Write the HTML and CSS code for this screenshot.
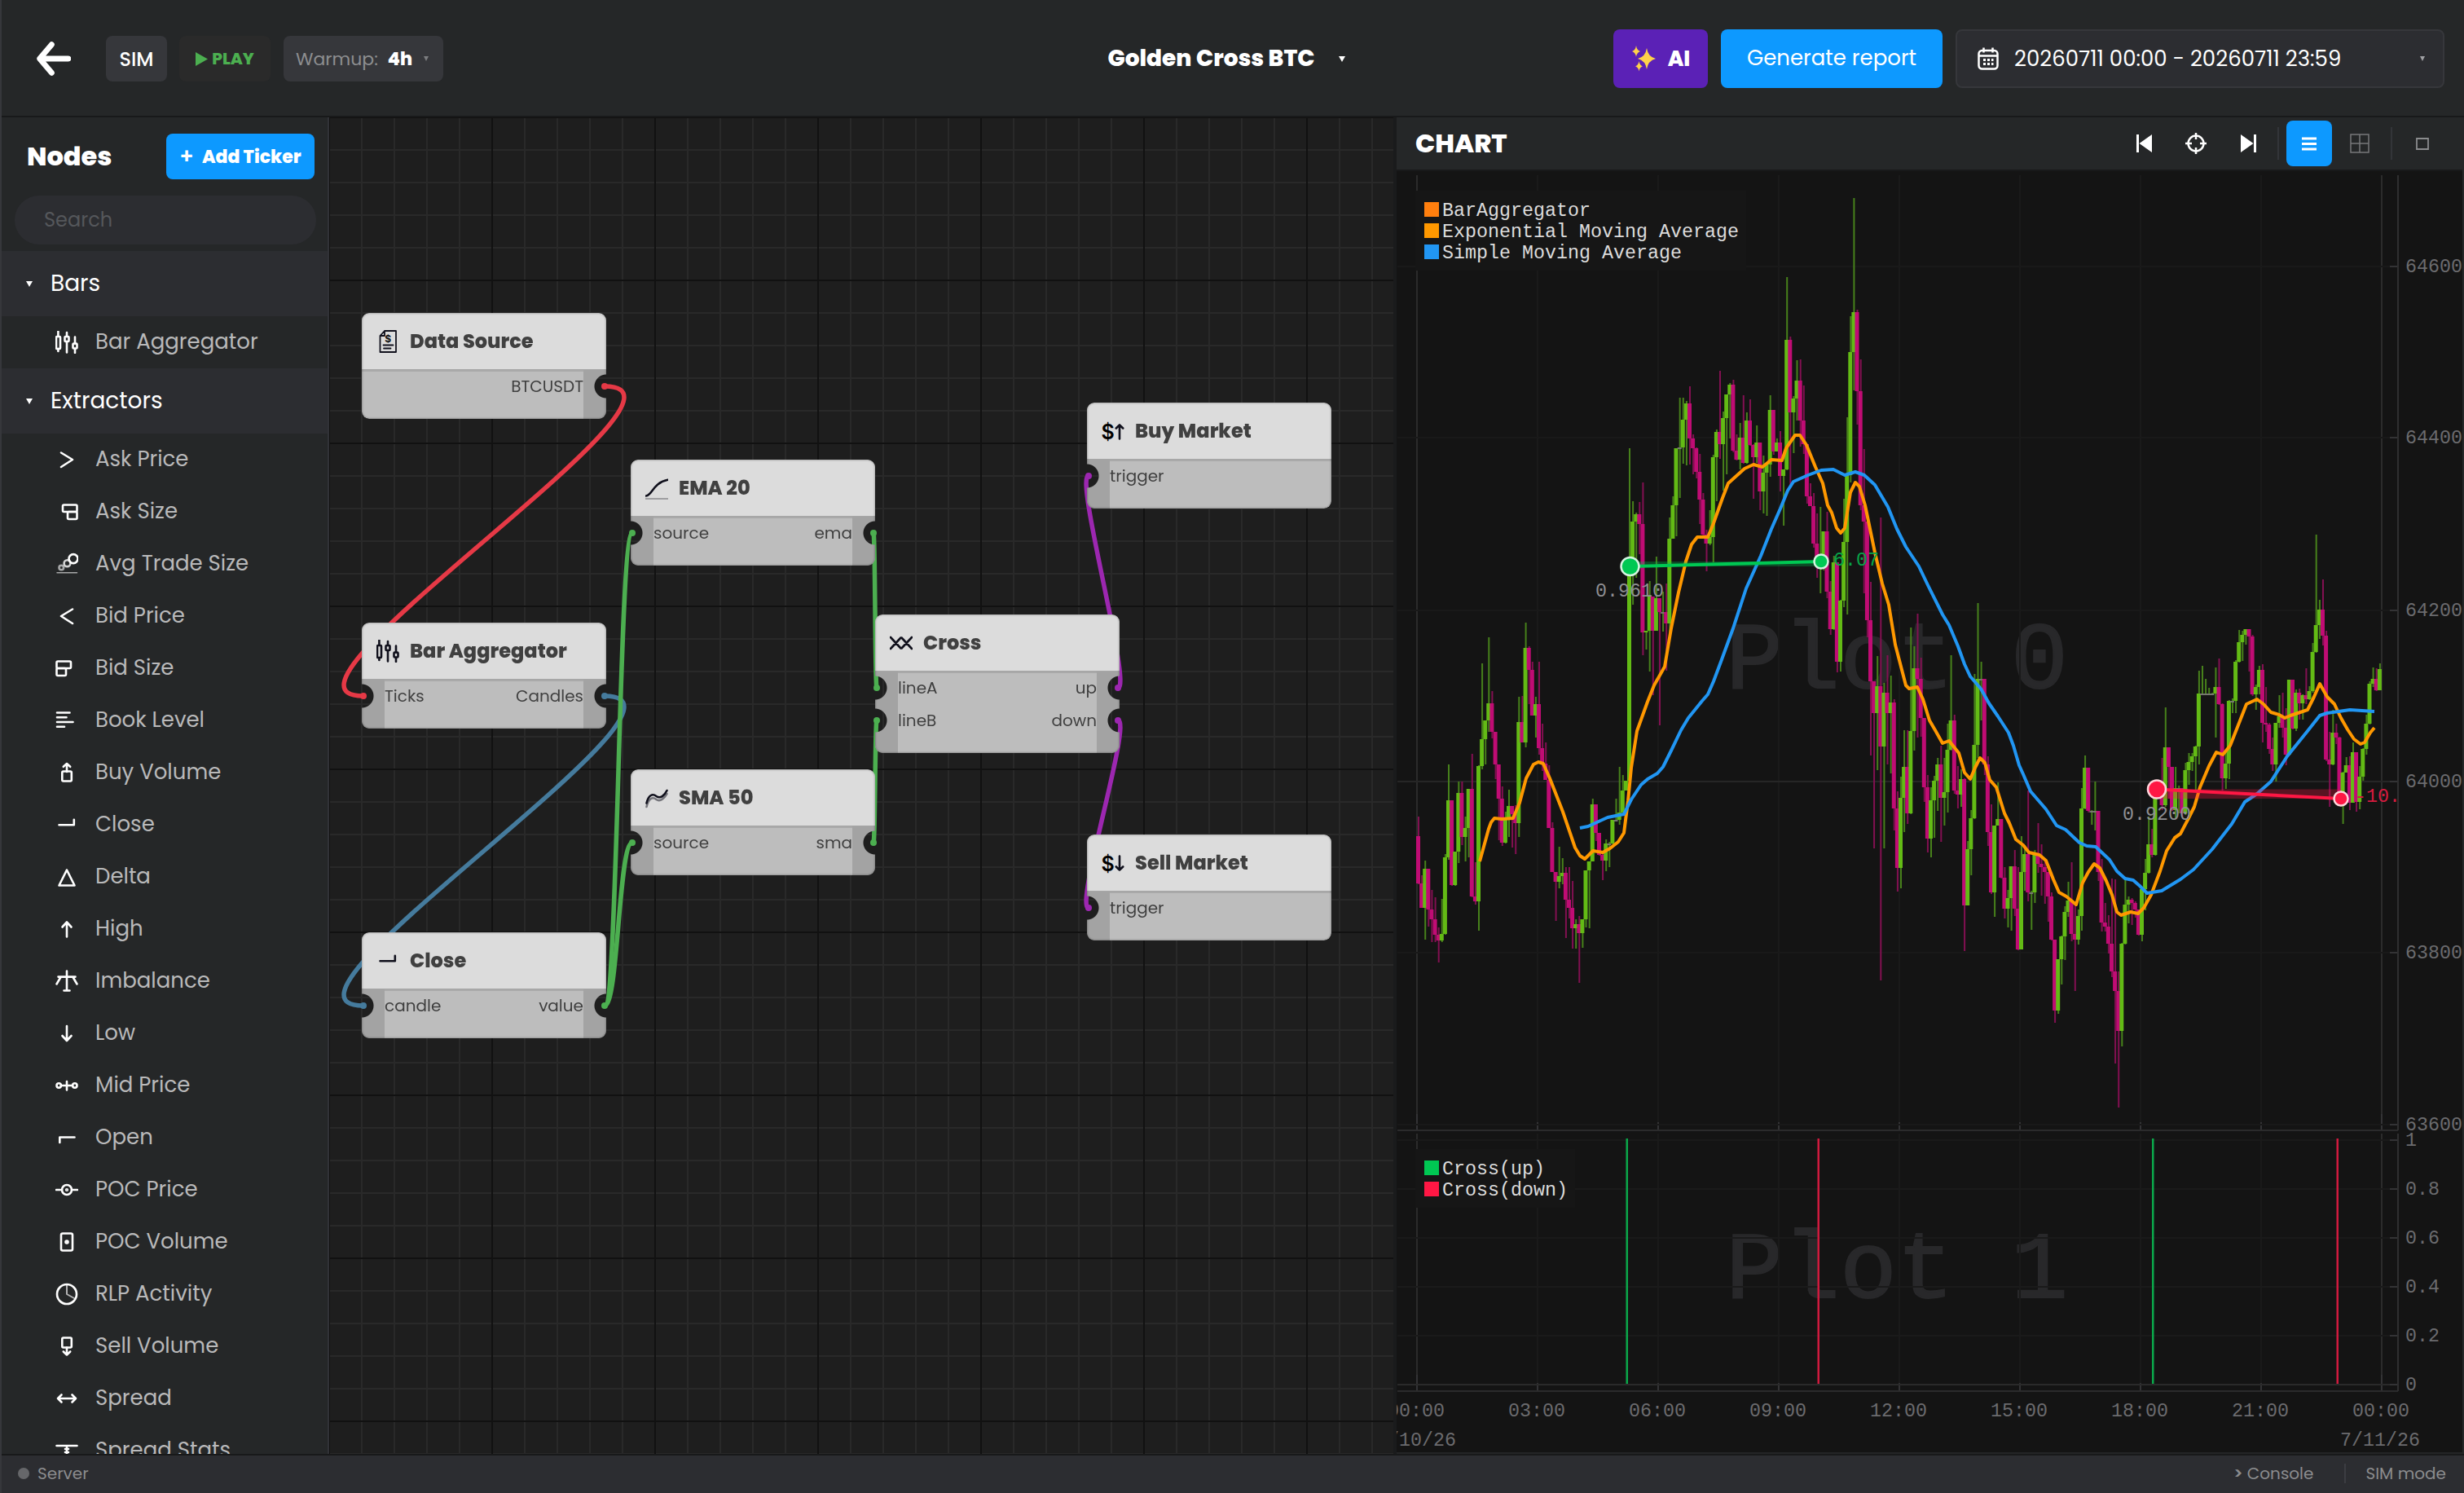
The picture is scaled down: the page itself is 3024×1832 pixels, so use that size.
FILE: index.html
```html
<!DOCTYPE html>
<html lang="en">
<head>
<meta charset="utf-8">
<title>Golden Cross BTC</title>
<link rel="stylesheet" href="styles.css">
</head>
<body>
<svg class="sprite" aria-hidden="true">
  <symbol id="i-bars" viewBox="0 0 28 28"><path d="M3.4.5v6M3.4 22v3M14 2v5M14 13v13.5M24 7.500v8M24 22v5"/><rect x="1" y="7" width="5" height="15" rx="1"/><rect x="11.500" y="7" width="5" height="6" rx="1"/><rect x="21.500" y="15.500" width="5" height="6" rx="1"/></symbol>
  <symbol id="i-askp" viewBox="0 0 28 28"><path d="M7 5.500 21 14 7 23"/></symbol>
  <symbol id="i-asks" viewBox="0 0 28 28"><rect x="9" y="5.500" width="17.500" height="8.500" rx="1.500"/><rect x="15" y="14" width="11.500" height="9" rx="1.500"/></symbol>
  <symbol id="i-avg" viewBox="0 0 28 28"><circle cx="7.300" cy="18.500" r="2.800" opacity=".6"/><circle cx="14.500" cy="13.200" r="3.900" opacity=".8"/><circle cx="22" cy="7.600" r="5.500"/><path d="M2 24.800h24.500" stroke-width="1.500" opacity=".6"/></symbol>
  <symbol id="i-bidp" viewBox="0 0 28 28"><path d="M21 5.500 7 14 21 23"/></symbol>
  <symbol id="i-bids" viewBox="0 0 28 28"><rect x="1.500" y="5.500" width="17.500" height="8.500" rx="1.500"/><rect x="1.500" y="14" width="11.500" height="9" rx="1.500"/></symbol>
  <symbol id="i-book" viewBox="0 0 28 28"><path d="M2 4.500h15.500M2 10.200h11.500M2 16h19.500M2 21.700h9"/></symbol>
  <symbol id="i-buyv" viewBox="0 0 28 28"><rect x="8.300" y="12.500" width="11.500" height="12" rx="1.500"/><path d="M14 13V3M9.800 6.800 14 3l4.200 3.800"/></symbol>
  <symbol id="i-close" viewBox="0 0 28 28"><path d="M4.500 14.300h18.300V7.800"/></symbol>
  <symbol id="i-delta" viewBox="0 0 28 28"><path d="M14 5.500 4.500 24.500h19z"/></symbol>
  <symbol id="i-high" viewBox="0 0 28 28"><path d="M14 23.500V5.500M8.500 11.500 14 5.500l5.500 6"/></symbol>
  <symbol id="i-imb" viewBox="0 0 28 28"><path d="M14 1.500v24M10.500 25.500h7M3.500 8.600h21M6.500 9 1.500 17.500M21.500 9l5 8.500"/></symbol>
  <symbol id="i-low" viewBox="0 0 28 28"><path d="M14 5v18M8.500 17l5.500 6 5.500-6"/></symbol>
  <symbol id="i-mid" viewBox="0 0 28 28"><circle cx="4.200" cy="14" r="2.700"/><circle cx="23.800" cy="14" r="2.700"/><path d="M7 14h14M14 9v10.500"/></symbol>
  <symbol id="i-open" viewBox="0 0 28 28"><path d="M5.300 20v-6.500h18.200"/></symbol>
  <symbol id="i-pocp" viewBox="0 0 28 28"><circle cx="14" cy="14" r="6"/><circle cx="14" cy="14" r=".8"/><path d="M1 14h7M20 14h7"/></symbol>
  <symbol id="i-pocv" viewBox="0 0 28 28"><rect x="7" y="3.500" width="14" height="21" rx="2"/><circle cx="14" cy="14" r="1.500"/></symbol>
  <symbol id="i-rlp" viewBox="0 0 28 28"><circle cx="14" cy="14" r="12"/><path d="M14 3v11l9 5" opacity=".65" stroke-width="2"/></symbol>
  <symbol id="i-sellv" viewBox="0 0 28 28"><rect x="8.300" y="3.500" width="11.500" height="12" rx="1.500"/><path d="M14 15.500v9M9.800 20.500 14 24.500l4.200-4"/></symbol>
  <symbol id="i-spread" viewBox="0 0 28 28"><path d="M3 14h22M7.500 9.500 3 14l4.500 4.500M20.500 9.500 25 14l-4.500 4.500"/></symbol>
  <symbol id="i-stats" viewBox="0 0 28 28"><path d="M1.500 8h25M14 9v15M12 12h4M12 16h4M1.500 26h25"/></symbol>
  <symbol id="i-doc" viewBox="0 0 28 28"><path d="M10 1h14v26H4.500V7zM10 1v6H4.500M8.500 18.500h12M9 22.500h8.500" stroke-width="1.800"/><text x="10.300" y="14.500" class="doc-sign">$</text></symbol>
  <symbol id="i-ema" viewBox="0 0 28 28"><path d="M.8 23.500C9 22.500 9 7.500 27.500 3.800"/><path d="M.5 27h27" stroke-width="1.200" opacity=".6"/></symbol>
  <symbol id="i-sma" viewBox="0 0 28 28"><path d="M1.500 25C4 14 9 12.500 13.500 16c5 3.500 10-2 13-7" opacity=".5"/><path d="M1.500 20.500C4 10 9 8.500 13.500 12c5 3.500 10-1 13-7"/></symbol>
  <symbol id="i-cross" viewBox="0 0 28 28"><path d="M1 7l12.500 13.500h1L27 7M1 21 13.500 7.500h1L27 21"/></symbol>
  <symbol id="i-buy" viewBox="0 0 28 28"><text x="-.5" y="23.500" class="buy-sign">$</text><path d="M22 23.500V6.500M17.800 10.500 22 6.300l4.200 4.200"/></symbol>
  <symbol id="i-sell" viewBox="0 0 28 28"><text x="-.5" y="23.500" class="buy-sign">$</text><path d="M22 5.500v17M17.800 18.500 22 22.700l4.200-4.200"/></symbol>
</svg>

<div class="app">
  <header class="topbar">
    <div class="topbar-left">
      <svg class="back" viewBox="0 0 40 40"><path d="M17.500 3.500 3.500 20l14 16.500M4 20h33"/></svg>
      <button class="btn-sim">SIM</button>
      <button class="btn-play"><svg width="15" height="17" viewBox="0 0 15 17"><path d="M0 0v17l15-8.500z" fill="currentColor"/></svg><span>PLAY</span></button>
      <div class="warmup"><span class="warmup-label">Warmup:</span><b>4h</b><i class="caret dim"></i></div>
    </div>
    <div class="title"><span>Golden Cross BTC</span><i class="caret"></i></div>
    <div class="topbar-right">
      <button class="btn-ai"><svg width="32" height="32" viewBox="0 0 32 32"><path d="M19 3q1.500 10.500 11 13-9.500 2.500-11 13-1.500-10.500-11-13 9.500-2.500 11-13zM6 0q.8 5.500 5 7-4.200 1.500-5 7-.8-5.500-5-7 4.200-1.500 5-7zM9.500 19q.7 5 4.500 6.300-3.800 1.300-4.500 6.300-.7-5-4.500-6.300 3.800-1.300 4.500-6.300z" fill="#ffd24a"/></svg><span>AI</span></button>
      <button class="btn-report">Generate report</button>
      <div class="daterange">
        <svg width="26" height="28" viewBox="0 0 26 28"><rect x="1.500" y="4" width="23" height="22.500" rx="4"/><path d="M1.500 10.500h23M7.500.5v6M18.500.5v6"/><path d="M7 15.500h3M12 15.500h3M17 15.500h2.500M7 20.500h3M12 20.500h3M17 20.500h2.500" stroke-width="3"/></svg>
        <span>20260711 00:00 - 20260711 23:59</span><i class="caret dim"></i>
      </div>
    </div>
  </header>

  <main class="workspace">
    <aside class="sidebar">
      <div class="side-head"><h2>Nodes</h2><button class="btn-add"><span class="plus">+</span><span>Add Ticker</span></button></div>
      <div class="search">Search</div>
      <div class="section"><i class="caret"></i>Bars</div>
      <div class="item"><svg><use href="#i-bars"/></svg><span>Bar Aggregator</span></div>
      <div class="section"><i class="caret"></i>Extractors</div>
      <div class="item"><svg><use href="#i-askp"/></svg><span>Ask Price</span></div>
      <div class="item"><svg><use href="#i-asks"/></svg><span>Ask Size</span></div>
      <div class="item"><svg><use href="#i-avg"/></svg><span>Avg Trade Size</span></div>
      <div class="item"><svg><use href="#i-bidp"/></svg><span>Bid Price</span></div>
      <div class="item"><svg><use href="#i-bids"/></svg><span>Bid Size</span></div>
      <div class="item"><svg><use href="#i-book"/></svg><span>Book Level</span></div>
      <div class="item"><svg><use href="#i-buyv"/></svg><span>Buy Volume</span></div>
      <div class="item"><svg><use href="#i-close"/></svg><span>Close</span></div>
      <div class="item"><svg><use href="#i-delta"/></svg><span>Delta</span></div>
      <div class="item"><svg><use href="#i-high"/></svg><span>High</span></div>
      <div class="item"><svg><use href="#i-imb"/></svg><span>Imbalance</span></div>
      <div class="item"><svg><use href="#i-low"/></svg><span>Low</span></div>
      <div class="item"><svg><use href="#i-mid"/></svg><span>Mid Price</span></div>
      <div class="item"><svg><use href="#i-open"/></svg><span>Open</span></div>
      <div class="item"><svg><use href="#i-pocp"/></svg><span>POC Price</span></div>
      <div class="item"><svg><use href="#i-pocv"/></svg><span>POC Volume</span></div>
      <div class="item"><svg><use href="#i-rlp"/></svg><span>RLP Activity</span></div>
      <div class="item"><svg><use href="#i-sellv"/></svg><span>Sell Volume</span></div>
      <div class="item"><svg><use href="#i-spread"/></svg><span>Spread</span></div>
      <div class="item"><svg><use href="#i-stats"/></svg><span>Spread Stats</span></div>
    </aside>

    <section class="canvas">
      <svg class="links" viewBox="404 144 1306 1640">
        <g stroke="#e63946"><path d="M742 474C890 474 298 854 446 854"/></g>
        <g stroke="#457b9d"><path d="M742 854C890 854 298 1234 446 1234"/></g>
        <g stroke="#4caf50"><path d="M742 1234C759 1234 759 654 776 654"/><path d="M742 1234C759 1234 759 1034 776 1034"/><path d="M1072 654C1074 654 1074 844 1076 844"/><path d="M1072 1034C1074 1034 1074 884 1076 884"/></g>
        <g stroke="#9c27b0"><path d="M1372 844C1390 844 1318 584 1336 584"/><path d="M1372 884C1390 884 1318 1114 1336 1114"/></g>
        <g class="ends">
          <circle cx="742" cy="474" r="4" fill="#e63946"/><circle cx="446" cy="854" r="4" fill="#e63946"/>
          <circle cx="742" cy="854" r="4" fill="#457b9d"/><circle cx="446" cy="1234" r="4" fill="#457b9d"/>
          <circle cx="742" cy="1234" r="4" fill="#4caf50"/><circle cx="776" cy="654" r="4" fill="#4caf50"/><circle cx="776" cy="1034" r="4" fill="#4caf50"/>
          <circle cx="1072" cy="654" r="4" fill="#4caf50"/><circle cx="1076" cy="844" r="4" fill="#4caf50"/><circle cx="1072" cy="1034" r="4" fill="#4caf50"/><circle cx="1076" cy="884" r="4" fill="#4caf50"/>
          <circle cx="1372" cy="844" r="4" fill="#9c27b0"/><circle cx="1336" cy="584" r="4" fill="#9c27b0"/><circle cx="1372" cy="884" r="4" fill="#9c27b0"/><circle cx="1336" cy="1114" r="4" fill="#9c27b0"/>
        </g>
      </svg>
      <article class="node out n-source"><h3><svg><use href="#i-doc"/></svg>Data Source</h3><div class="ports"><p><span></span><span>BTCUSDT</span></p></div></article>
      <article class="node in out n-bars"><h3><svg><use href="#i-bars"/></svg>Bar Aggregator</h3><div class="ports"><p><span>Ticks</span><span>Candles</span></p></div></article>
      <article class="node in out n-close"><h3><svg><use href="#i-close"/></svg>Close</h3><div class="ports"><p><span>candle</span><span>value</span></p></div></article>
      <article class="node in out n-ema"><h3><svg><use href="#i-ema"/></svg>EMA 20</h3><div class="ports"><p><span>source</span><span>ema</span></p></div></article>
      <article class="node in out n-sma"><h3><svg><use href="#i-sma"/></svg>SMA 50</h3><div class="ports"><p><span>source</span><span>sma</span></p></div></article>
      <article class="node in out two n-cross"><h3><svg><use href="#i-cross"/></svg>Cross</h3><div class="ports"><p><span>lineA</span><span>up</span></p><p><span>lineB</span><span>down</span></p></div></article>
      <article class="node in n-buy"><h3><svg><use href="#i-buy"/></svg>Buy Market</h3><div class="ports"><p><span>trigger</span></p></div></article>
      <article class="node in n-sell"><h3><svg><use href="#i-sell"/></svg>Sell Market</h3><div class="ports"><p><span>trigger</span></p></div></article>
    </section>

    <section class="chart">
      <div class="chart-head">
        <h2>CHART</h2>
        <div class="tools">
          <svg width="20" height="22" viewBox="0 0 20 22"><path d="M1 0h3v22H1zM20 0v22L4.500 11z" fill="#fff"/></svg>
          <svg class="target" width="28" height="28" viewBox="0 0 28 28"><circle cx="14" cy="14" r="9.500"/><path d="M14 1v8M14 19v8M1 14h8M19 14h8"/></svg>
          <svg class="next" width="20" height="22" viewBox="0 0 20 22"><path d="M16 0h3v22h-3zM0 0v22l15.500-11z" fill="#fff"/></svg>
          <i class="sep"></i>
          <button class="btn-list"><svg width="18" height="18" viewBox="0 0 18 18"><path d="M0 3h18M0 9.500h18M0 16h18" stroke="#fff" stroke-width="3.200"/></svg></button>
          <svg class="grid" width="24" height="24" viewBox="0 0 24 24"><path d="M1 1h22v22H1zM12 1v22M1 12h22"/></svg>
          <i class="sep"></i>
          <svg class="win" width="16" height="16" viewBox="0 0 16 16"><path d="M1 2h14v13H1z"/></svg>
        </div>
      </div>
      <svg class="plot" id="plot" viewBox="1714 210 1308 1574"></svg>
    </section>
  </main>

  <footer class="status">
    <i class="dot"></i><span class="server">Server</span>
    <span class="console"><b>&gt;</b> Console</span><i class="sep"></i><span class="mode">SIM mode</span>
  </footer>
</div>
<script src="plot.js"></script>
</body>
</html>
```
FILE: styles.css
```css
* { box-sizing: border-box; }
body { margin: 0; background: #252728; font-family: "Poppins", "Inter", sans-serif; color: #fff; }
h2, h3, p { margin: 0; }
button { font: inherit; color: inherit; border: 0; padding: 0; display: flex; align-items: center; justify-content: center; }
.sprite { display: none; }
.app { width: 3024px; height: 1832px; display: flex; flex-direction: column; border-left: 2px solid #36373b; overflow: hidden; }

.caret { width: 0; height: 0; border: 4px solid transparent; border-top: 7px solid currentColor; border-bottom: 0; flex: none; }
.caret.dim { color: #a0a1a4; border-width: 6px 3.500px 0; }

.topbar { height: 144px; flex: none; border-bottom: 2px solid #18191a; display: grid; grid-template-columns: 1fr auto 1fr; align-items: center; padding: 2px 24px 0 24px; }
.topbar-left { display: flex; align-items: center; height: 56px; padding-left: 19px; }
.back { width: 42px; height: 42px; fill: none; stroke: #fff; stroke-width: 6.500; stroke-linecap: round; stroke-linejoin: round; margin-right: 43px; }
.btn-sim { width: 75px; height: 56px; border-radius: 8px; background: #36373b; font-size: 24px; font-weight: 500; }
.btn-play { width: 112px; height: 56px; border-radius: 8px; background: #2a2a2a; color: #4caf50; font-size: 20px; font-weight: 800; margin: 0 16px 0 15px; gap: 5px; }
.warmup { width: 196px; height: 56px; border-radius: 8px; background: #36373b; display: flex; align-items: center; padding-left: 15px; font-size: 22px; }
.warmup b { font-weight: 800; }
.warmup-label { color: #8d8e90; margin-right: 12px; }
.warmup .caret { margin-left: 14px; color: #7c7d80; }
.title { display: flex; align-items: center; gap: 29px; padding-right: 16px; font-size: 28px; font-weight: 800; }
.topbar-right { display: flex; justify-content: flex-end; gap: 16px; height: 72px; }
.btn-ai { width: 116px; border-radius: 8px; background: #5b21b6; font-size: 26px; font-weight: 800; gap: 13px; }
.btn-report { width: 272px; border-radius: 8px; background: #0d99ff; font-size: 26px; padding-bottom: 2px; }
.daterange { width: 600px; border-radius: 8px; border: 2px solid #36373b; background: #2c2d31; display: flex; align-items: center; padding: 0 22px 0 25px; font-size: 26px; }
.daterange svg { fill: none; stroke: #fff; stroke-width: 2.500; margin-right: 19px; }
.daterange .caret { margin-left: auto; }

.workspace { height: 1640px; flex: none; display: grid; grid-template-columns: 402px 1306px 1312px; }

.sidebar { border-right: 2px solid #313237; overflow: hidden; }
.side-head { height: 96px; padding: 0 16px 0 31px; display: flex; align-items: center; justify-content: space-between; }
.side-head h2 { font-size: 32px; font-weight: 800; }
.btn-add { width: 182px; height: 56px; border-radius: 8px; background: #0d99ff; font-size: 22px; font-weight: 800; gap: 10px; }
.plus { font-size: 26px; font-weight: 600; }
.search { height: 60px; margin: 0 14px 8px 16px; border-radius: 30px; background: #2c2d31; color: #55575b; font-size: 24px; line-height: 60px; padding-left: 36px; }
.section { height: 80px; background: #2c2d31; display: flex; align-items: center; gap: 22px; padding-left: 30px; font-size: 28px; }
.item { height: 64px; display: flex; align-items: center; gap: 21px; padding-left: 66px; font-size: 26px; color: #b9b9ba; }
.item span { padding-bottom: 2px; }
.item svg, .node h3 svg { width: 28px; height: 28px; flex: none; fill: none; stroke: #fff; stroke-width: 2.600; stroke-linecap: round; stroke-linejoin: round; overflow: visible; }

.canvas {
  position: relative; overflow: hidden; background-color: #1e1e1e;
  background-image:
    repeating-linear-gradient(90deg, #111 0 1px, transparent 1px 199px, #111 199px 200px),
    repeating-linear-gradient(180deg, #111 0 1px, transparent 1px 199px, #111 199px 200px),
    repeating-linear-gradient(90deg, #292929 0 1px, transparent 1px 39px, #292929 39px 40px),
    repeating-linear-gradient(180deg, #292929 0 1px, transparent 1px 39px, #292929 39px 40px);
}
.links { position: absolute; left: 0; top: 0; width: 1306px; height: 1640px; fill: none; stroke-width: 5.500; }
.node {
  position: absolute; width: 300px; height: 130px; border-radius: 9px; overflow: hidden; background: #bdbdbd; color: #3f3f3f;
  --il: #000; --ol: #000; --il2: #000; --ol2: #000;
  mask-image:
    radial-gradient(circle at 0 90px, var(--il) 14px, #000 15px),
    radial-gradient(circle at 100% 90px, var(--ol) 14px, #000 15px),
    radial-gradient(circle at 0 130px, var(--il2) 14px, #000 15px),
    radial-gradient(circle at 100% 130px, var(--ol2) 14px, #000 15px);
  mask-composite: intersect;
}
.node::after { content: ""; position: absolute; inset: 0; border-radius: 9px; box-shadow: inset 0 0 2px 1px rgba(0, 0, 0, .22); }
.node.in { --il: transparent; }
.node.out { --ol: transparent; }
.node.two { height: 170px; --il2: transparent; --ol2: transparent; }
.node h3 { height: 70px; display: flex; align-items: center; gap: 13px; padding-left: 18px; background: #dcdcdc; border-bottom: 1px solid #a6a6a6; font-size: 24px; font-weight: 800; color: #404040; }
.node h3 svg { stroke: #10101c; color: #10101c; }
.doc-sign { font: 700 12px "Inter", sans-serif; fill: #111; stroke: none; }
.buy-sign { font: 600 25px "Inter", sans-serif; fill: #000; stroke: none; }
.ports { height: 100%; border: 0 solid #a3a3a3; font-size: 20px; box-shadow: inset 0 2px #a9a9a9; }
.node.in .ports { border-left-width: 28px; }
.node.out .ports { border-right-width: 28px; }
.ports p { height: 40px; line-height: 40px; display: flex; justify-content: space-between; }
.n-source { left: 40px; top: 240px; }
.n-bars { left: 40px; top: 620px; }
.n-close { left: 40px; top: 1000px; }
.n-ema { left: 370px; top: 420px; }
.n-sma { left: 370px; top: 800px; }
.n-cross { left: 670px; top: 610px; }
.n-buy { left: 930px; top: 350px; }
.n-sell { left: 930px; top: 880px; }

.chart { border-left: 4px solid #1a1b1c; display: flex; flex-direction: column; }
.chart-head { height: 66px; flex: none; border-bottom: 2px solid #18191a; display: flex; align-items: center; justify-content: space-between; padding: 0 41px 0 23px; }
.chart-head h2 { font-size: 32px; font-weight: 800; }
.tools { display: flex; align-items: center; }
.tools svg { fill: none; stroke-width: 2.500; }
.target { stroke: #fff; margin: 0 41px 0 40px; }
.tools .sep { width: 2px; height: 40px; background: #333539; }
.next + .sep { margin-left: 25px; }
.btn-list { width: 56px; height: 56px; border-radius: 8px; background: #0d99ff; margin-left: 9px; }
.tools .grid { stroke: #77787a; stroke-width: 1.500; margin: 0 26px 0 22px; }
.tools .win { stroke: #8a8b8d; stroke-width: 1.800; margin-left: 29px; }
.plot { width: 1308px; height: 1574px; background: #141414; flex: none; font-family: "Liberation Mono", monospace; font-size: 23.330px; }

.status { height: 48px; flex: none; border-top: 2px solid #18191a; background: #2c2d31; display: flex; align-items: center; font-size: 20px; color: #8b8c8e; padding: 0 22px 3px 20px; }
.dot { width: 14px; height: 14px; border-radius: 50%; background: #66676a; margin-right: 10px; }
.console { margin-left: auto; }
.console b { font-weight: 600; }
.status .sep { width: 2px; height: 24px; background: #3c3d42; margin: 0 24px 0 38px; }
```
FILE: plot.js
```js
// Five-minute bars as [close, high, low] in plot pixels; each bar opens at the previous close.
const FIRST_OPEN = 1026;
const BARS = [
[1084,1002,1085],[1114,1074,1114],[1066,1056,1153],[1116,1066,1137],[1128,1092,1156],[1147,1101,1156],[1154,1138,1181],[1146,1103,1156],[1052,1048,1147],[982,938,1055],
[1086,982,1087],[1045,1045,1087],[973,959,1059],[1027,959,1037],[1016,1002,1057],[968,968,1052],[1100,925,1101],[1106,1058,1110],[940,939,1142],[907,814,944],
[884,884,938],[863,782,898],[898,848,906],[938,898,956],[980,938,1031],[1034,965,1038],[1003,996,1035],[989,969,1027],[999,989,1040],[1010,988,1048],
[886,855,1027],[911,854,911],[795,764,917],[822,793,864],[878,812,878],[864,855,905],[918,812,926],[937,888,946],[957,911,957],[1016,939,1016],
[1070,1009,1070],[1082,1070,1130],[1075,1039,1090],[1071,1053,1085],[1104,1064,1151],[1114,1064,1127],[1139,1081,1164],[1134,1128,1164],[1145,1124,1206],[1128,1128,1163],
[1068,1068,1138],[1057,1057,1139],[987,980,1057],[1022,987,1032],[1049,1022,1050],[1056,1045,1080],[1035,1030,1069],[1035,1033,1064],[1006,1006,1036],[1006,980,1008],
[997,941,1012],[970,951,997],[958,958,970],[695,550,958],[640,615,742],[631,629,709],[643,616,680],[776,592,804],[774,774,797],[732,713,824],
[774,732,853],[734,683,774],[751,734,890],[751,726,775],[765,716,823],[661,635,776],[620,609,661],[550,550,658],[549,488,611],[515,488,569],
[495,492,571],[538,474,570],[550,533,582],[579,549,587],[613,557,643],[656,605,659],[667,650,701],[659,626,669],[561,558,690],[530,527,615],
[545,455,563],[513,505,602],[484,484,582],[472,470,538],[553,466,555],[564,533,565],[537,519,576],[568,485,569],[516,506,569],[546,490,547],
[561,545,612],[543,522,568],[603,543,626],[580,559,630],[570,567,633],[503,485,585],[554,503,558],[543,538,554],[584,529,603],[576,576,645],
[417,340,577],[506,413,597],[489,486,556],[467,442,516],[516,441,548],[545,473,557],[609,545,618],[621,593,621],[667,605,672],[688,630,709],
[689,622,728],[652,652,700],[726,628,734],[772,713,779],[690,682,773],[812,704,825],[737,736,824],[665,612,745],[583,512,754],[432,388,592],
[383,243,479],[480,380,521],[620,441,626],[640,551,728],[761,656,782],[836,714,927],[875,836,1041],[842,805,945],[916,635,1203],[850,838,1041],
[875,804,938],[862,829,949],[992,858,1019],[1065,971,1094],[979,953,1090],[941,896,1021],[998,896,1011],[897,770,999],[820,793,921],[833,753,905],
[881,807,904],[966,881,984],[1029,951,1046],[982,966,1052],[958,952,1028],[938,930,995],[979,915,1033],[972,930,1013],[920,888,997],[884,804,921],
[970,877,974],[975,940,992],[956,944,990],[1111,955,1167],[1042,1032,1111],[1004,994,1074],[914,827,1005],[833,740,930],[833,812,884],[938,833,951],
[1021,928,1038],[1095,987,1097],[1013,1013,1125],[1005,960,1013],[1077,1005,1078],[1115,1064,1127],[1102,1092,1138],[1063,1063,1142],[1115,1043,1124],[1165,1064,1166],
[1070,1026,1165],[1048,1037,1093],[1095,970,1106],[1095,1093,1141],[1048,1043,1108],[1060,1010,1071],[1064,1036,1099],[1070,1055,1109],[1100,1070,1131],[1153,1095,1154],
[1240,1153,1255],[1177,1177,1244],[1149,1148,1208],[1119,1112,1178],[1105,1082,1125],[1146,1058,1155],[1153,1110,1216],[1124,1116,1159],[992,967,1142],[942,927,993],
[995,942,997],[995,994,1012],[995,959,1019],[1070,995,1081],[1132,1054,1143],[1137,1108,1143],[1158,1123,1170],[1192,1078,1199],[1216,1079,1305],[1265,1192,1359],
[1158,1157,1284],[1110,1079,1159],[1104,1100,1133],[1108,1102,1135],[1116,1106,1126],[1147,1116,1148],[1091,1091,1155],[1071,1054,1117],[1036,1002,1072],[1049,1017,1052],
[980,970,1050],[974,970,980],[988,930,994],[917,868,990],[941,917,980],[994,941,995],[967,941,1004],[967,964,998],[998,967,1002],[945,936,1000],
[935,924,963],[928,924,946],[916,915,970],[851,823,938],[851,817,853],[851,833,853],[851,844,853],[851,850,853],[843,819,905],[864,808,865],
[955,863,970],[937,923,968],[860,859,956],[860,857,875],[812,810,875],[788,773,813],[779,774,811],[772,772,791],[781,772,824],[852,779,854],
[843,840,871],[822,817,852],[887,815,911],[889,843,898],[919,887,925],[938,905,946],[887,887,959],[879,853,893],[893,850,905],[926,869,939],
[834,834,927],[894,834,895],[850,846,897],[863,845,883],[853,852,883],[858,820,864],[848,842,859],[800,789,850],[767,656,801],[748,736,784],
[780,711,792],[932,774,934],[938,898,990],[899,871,939],[905,888,913],[980,904,980],[948,947,1011],[939,929,948],[985,928,994],[923,911,985],
[984,923,996],[953,940,993],[919,918,958],[888,877,926],[839,836,889],[833,819,843],[847,820,848],[821,814,847]
];

const EMA = "1816,1057 1827,1017 1830,1009 1834,1004 1843,1005 1857,1004 1865,985 1873,955 1882,938 1888,935 1894,937 1902,955 1918,996 1933,1040 1939,1050 1945,1054 1955,1044 1967,1046 1976,1041 1986,1033 1993,1022 1998,983 2002,942 2009,897 2022,861 2030,841 2043,818 2051,771 2060,727 2069,689 2076,668 2083,659 2096,659 2103,642 2114,611 2121,593 2141,575 2152,570 2163,573 2174,564 2187,565 2192,550 2203,534 2209,534 2217,546 2228,573 2237,593 2243,620 2248,629 2254,648 2259,654 2264,648 2271,604 2277,592 2282,597 2289,620 2301,678 2310,716 2318,742 2326,791 2339,841 2343,845 2353,843 2360,858 2368,884 2375,896 2384,912 2392,909 2404,924 2411,948 2418,956 2424,942 2430,930 2436,936 2442,957 2450,966 2460,998 2466,1010 2474,1030 2483,1037 2490,1046 2503,1049 2511,1056 2520,1079 2527,1095 2536,1100 2548,1110 2556,1083 2563,1070 2570,1060 2577,1065 2585,1081 2592,1098 2598,1119 2603,1123 2615,1119 2624,1121 2631,1114 2640,1098 2651,1069 2659,1044 2669,1028 2676,1023 2686,1004 2693,990 2700,966 2711,940 2720,923 2728,926 2737,915 2748,887 2757,864 2770,858 2778,864 2787,874 2797,877 2804,881 2811,878 2832,871 2840,855 2847,839 2856,855 2865,864 2873,881 2881,895 2889,907 2897,913 2902,911 2909,899 2914,893";
const SMA = "1939,1016 1949,1014 1962,1008 1973,1003 1993,999 2002,981 2014,963 2022,956 2034,949 2041,941 2051,921 2063,896 2072,881 2089,860 2096,852 2103,836 2112,812 2127,771 2143,722 2161,682 2174,649 2185,624 2194,602 2201,591 2219,583 2235,577 2250,576 2264,583 2277,579 2288,583 2301,595 2317,622 2328,649 2339,671 2355,695 2366,718 2384,754 2392,767 2403,793 2411,815 2418,830 2431,845 2441,863 2452,879 2465,899 2471,915 2478,939 2483,950 2492,971 2511,993 2524,1013 2535,1018 2552,1034 2561,1038 2572,1039 2589,1055 2598,1069 2608,1078 2618,1080 2626,1087 2635,1096 2653,1093 2676,1079 2692,1067 2715,1042 2739,1011 2755,984 2770,974 2787,959 2807,928 2832,897 2847,878 2856,875 2884,871 2914,873";

const out = [];
const rect = (x, y, w, h, fill) => out.push(`<rect x="${x}" y="${y}" width="${w}" height="${h}" fill="${fill}"/>`);
const text = (x, y, s, fill, extra = "") => out.push(`<text x="${x}" y="${y}" fill="${fill}" ${extra}>${s}</text>`);

const hours = ["00:00", "03:00", "06:00", "09:00", "12:00", "15:00", "18:00", "21:00", "00:00"];
const prices = [[64600, 327], [64400, 537], [64200, 749], [64000, 959], [63800, 1169], [63600, 1380]];
const levels = [["1", 1399], ["0.8", 1459], ["0.6", 1519], ["0.4", 1579], ["0.2", 1639], ["0", 1699]];

// Watermarks
text(2118, 844, "Plot 0", "#28282a", 'font-size="116.67" stroke="#28282a" stroke-width="2"');
text(2118, 1592, "Plot 1", "#28282a", 'font-size="116.67" stroke="#28282a" stroke-width="2"');

// Grid and ticks of both plots
hours.forEach((h, i) => {
  const x = 1738 + i * 148, major = i === 0 || i === 8;
  rect(x, 215, 2, 1172, major ? "#2b2b2b" : "#1a1a1a");
  rect(x, 1391, 2, 316, major ? "#2b2b2b" : "#1a1a1a");
  rect(x, major ? 1367 : 1377, 2, major ? 20 : 10, "#333335");
  rect(x, major ? 1687 : 1697, 2, major ? 20 : 10, "#333335");
  text(x, 1738, h, "#6b6b6e", 'text-anchor="middle"');
});
prices.forEach(([p, y]) => {
  rect(1715, y - 1, 1228, 2, p === 64000 ? "#262626" : "#191919");
  rect(2933, y - 1, 10, 2, "#333335");
  text(2952, y + 7, p, "#6b6b6e");
});
levels.forEach(([l, y]) => {
  rect(1715, y - 1, 1228, 2, l === "0" ? "#2a2a2a" : "#1a1a1a");
  rect(2933, y - 1, 10, 2, "#333335");
  text(2952, y + 7, l, "#6b6b6e");
});
rect(1715, 1386, 1228, 2, "#2b2b2c");
rect(1715, 1706, 1228, 2, "#2b2b2c");
rect(2942, 215, 2, 1172, "#2f2f30");
rect(2942, 1391, 2, 316, "#2f2f30");
text(1738, 1774, "7/10/26", "#6b6b6e", 'text-anchor="middle"');
text(2921, 1774, "7/11/26", "#6b6b6e", 'text-anchor="middle"');

// Candles
let open = FIRST_OPEN;
BARS.forEach(([close, high, low], i) => {
  const x = 1741 + i * 4.111, up = close < open;
  const flat = Math.abs(close - open) < 1.5;
  rect((x - 1).toFixed(1), high, 2, low - high, up || flat ? "#47811b" : "#821051");
  rect((x - 3).toFixed(1), Math.min(open, close), 5, Math.max(2, Math.abs(close - open)), flat ? "#76786f" : up ? "#63bb15" : "#c00c74");
  open = close;
});

// Moving averages
out.push(`<polyline points="${EMA}" fill="none" stroke="#ff9800" stroke-width="4" stroke-linejoin="round"/>`);
out.push(`<polyline points="${SMA}" fill="none" stroke="#2196f3" stroke-width="4" stroke-linejoin="round"/>`);

// Closed trades
const trade = (x1, y1, x2, y2, c, ring) => {
  rect(x1, Math.min(y1, y2), x2 - x1, Math.abs(y2 - y1), c + "4d");
  out.push(`<path d="M${x1} ${y1}L${x2} ${y2}" stroke="${c}" stroke-width="4"/>`);
  out.push(`<circle cx="${x1}" cy="${y1}" r="11" fill="${c}" stroke="${ring}" stroke-width="2.5"/><circle cx="${x2}" cy="${y2}" r="8.500" fill="${c}" stroke="${ring}" stroke-width="2.5"/>`);
};
trade(2000.5, 695, 2235, 689, "#00c853", "#d5f5e0");
trade(2647, 968.5, 2873, 980, "#ff1744", "#ffd5dc");
text(1958, 732, "0.9610", "#8f8f92");
text(2605, 1006, "0.9200", "#8f8f92");
text(2250, 694, "6.07", "#07a548");
text(2890, 984, "-10.", "#d51b3f");

// Cross signals
[[1995.5, "#0aa84a"], [2230.5, "#d01a3e"], [2641, "#0aa84a"], [2867.5, "#d01a3e"]].forEach(([x, c]) => rect(x, 1397, 2.5, 301, c));

// Legends
rect(1737, 234, 406, 98, "#161616");
rect(1737, 1410, 196, 72, "#161616");
[["BarAggregator", "#ff7f0e", 248], ["Exponential Moving Average", "#ff9800", 274], ["Simple Moving Average", "#2196f3", 300], ["Cross(up)", "#00c853", 1424], ["Cross(down)", "#ff1744", 1450]]
  .forEach(([l, c, y]) => { rect(1748, y, 18, 18, c); text(1770, y + 17, l, "#dcdcdc"); });

// Panel edge
rect(1714, 1782, 1308, 2, "#242526");

document.getElementById("plot").innerHTML = out.join("");
```
